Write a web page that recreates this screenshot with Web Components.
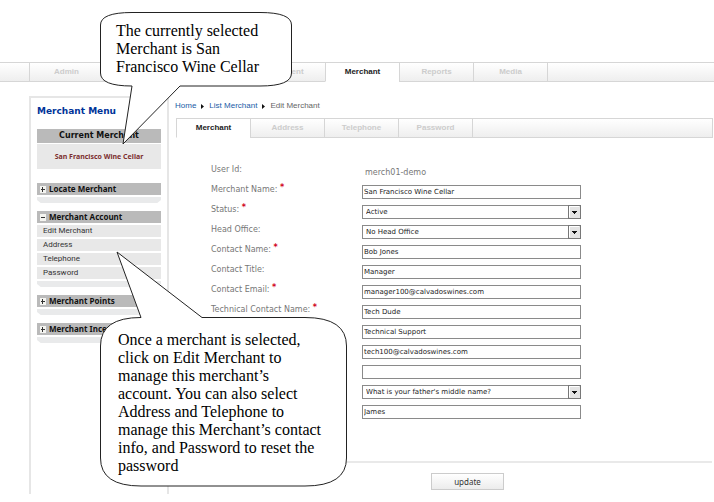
<!DOCTYPE html>
<html lang="en">
<head>
<meta charset="utf-8">
<title>Edit Merchant</title>
<style>
  body {
    margin: 0;
    background: #fff;
    font-family: "DejaVu Sans", sans-serif;
    font-size: 8px;
  }
</style>
</head>
<body>
<merchant-page></merchant-page>

<script>
class TabBar extends HTMLElement {
  constructor() {
    super()
    this.attachShadow({ mode: 'open' })
  }

  connectedCallback() {
    const active = this.getAttribute('active')
    const tabs = this.getAttribute('tabs').split(',')

    this.shadowRoot.innerHTML = `
      <style>
        :host {
          display: block;
          font: bold 8px/18px "Liberation Sans", Arial, sans-serif;
        }

        nav {
          display: flex;
        }

        .lead, .rest, a {
          box-sizing: border-box;
          height: 20px;
          border: solid #d6d6d6;
          border-width: 1px 0;
          background: linear-gradient(#fff, #eee);
        }

        .lead {
          width: var(--lead, 0);
        }

        .rest {
          flex: 1;
          border-width: 1px var(--end, 0) 1px 1px;
        }

        a {
          width: 74px;
          border-left-width: 1px;
          color: #ccc;
          text-align: center;
          text-decoration: none;
        }

        a.active {
          background: #fff;
          border-bottom-color: #fff;
          color: #222;
        }
      </style>

      <nav>
        <span class="lead"></span>
        ${tabs
        .map(
            tab => `<a href="#" class="${tab === active ? 'active' : ''}">${tab}</a>`
        )
        .join('')}
        <span class="rest"></span>
      </nav>
    `
  }
}

class MenuGroup extends HTMLElement {
  constructor() {
    super()
    this.attachShadow({ mode: 'open' })
  }

  connectedCallback() {
    const open = this.hasAttribute('open')

    this.shadowRoot.innerHTML = `
      <style>
        :host {
          display: block;
          margin-bottom: 8px;
        }

        button {
          display: flex;
          align-items: center;
          gap: 3px;
          box-sizing: border-box;
          width: 100%;
          height: 12px;
          padding: 0 3px;
          border: 0;
          background: #bababa;
          color: #111;
          font: bold 8px/12px "Noto Sans", sans-serif;
          white-space: nowrap;
        }

        svg {
          flex: none;
        }

        .foot {
          height: 6px;
          margin-top: 2px;
          background: #e9eaeb;
          clip-path: polygon(0 0, 100% 0, 100% 50%, 97% 100%, 3% 100%, 0 50%);
        }
      </style>

      <button type="button" aria-expanded="${open}">
        <svg width="6" height="7" viewBox="0 0 6 7" shape-rendering="crispEdges">
          <rect width="6" height="7" fill="#f4f4f0"/>
          <path d="M1 3h4v1H1z${open ? '' : 'M2 1h1v5H2z'}" fill="#333"/>
        </svg>
        ${this.getAttribute('label')}
      </button>
      <slot></slot>
      <div class="foot"></div>
    `
  }
}

class MenuItem extends HTMLElement {
  constructor() {
    super()
    this.attachShadow({ mode: 'open' })
    this.shadowRoot.innerHTML = `
      <style>
        :host {
          display: block;
          margin-top: 2px;
          background: #e8e8e8;
        }

        a {
          display: block;
          padding-left: 6px;
          color: #333;
          font: 8px/12px Roboto, sans-serif;
          text-decoration: none;
        }
      </style>

      <a href="#"><slot></slot></a>
    `
  }
}

class MerchantMenu extends HTMLElement {
  constructor() {
    super()
    this.attachShadow({ mode: 'open' })
    this.shadowRoot.innerHTML = `
      <style>
        :host {
          display: block;
          box-sizing: border-box;
          width: 140px;
          padding: 6px 6px 0 6px;
          border: 2px solid #e6e6e6;
          border-bottom: 0;
        }

        h2 {
          margin: 0 0 10px;
          color: #039;
          font: bold 9px/15px "DejaVu Sans", sans-serif;
        }

        h3 {
          margin: 0 0 1px;
          background: #bababa;
          color: #111;
          font: bold 8px/14px "DejaVu Sans", sans-serif;
          text-align: center;
        }

        .current {
          margin: 0 0 14px;
          background: #e8e8e8;
          color: #7c2f2f;
          font: bold 7px/25px "Noto Sans", sans-serif;
          text-align: center;
        }
      </style>

      <h2>Merchant Menu</h2>
      <h3>Current Merchant</h3>
      <p class="current">San Francisco Wine Cellar</p>
      <menu-group label="Locate Merchant"></menu-group>
      <menu-group label="Merchant Account" open>
        <menu-item>Edit Merchant</menu-item>
        <menu-item>Address</menu-item>
        <menu-item>Telephone</menu-item>
        <menu-item>Password</menu-item>
      </menu-group>
      <menu-group label="Merchant Points"></menu-group>
      <menu-group label="Merchant Incentives"></menu-group>
    `
  }
}

class FormRow extends HTMLElement {
  constructor() {
    super()
    this.attachShadow({ mode: 'open' })
  }

  control() {
    const value = this.getAttribute('value') || ''
    const name = this.getAttribute('name')
    const aria = name ? `aria-label="${name}"` : ''

    switch (this.getAttribute('type')) {
      case 'static':
        return `<output id="field">${value}</output>`
      case 'select':
        return `
          <div class="select">
            <select id="field" ${aria}><option>${value}</option></select>
            <svg width="13" height="14" viewBox="0 0 13 14" shape-rendering="crispEdges">
              <rect width="13" height="14" fill="#777"/>
              <rect x="1" y="1" width="11" height="12" fill="#e4e4e4"/>
              <path d="M1 1h10v1H2v10H1z" fill="#fff"/>
              <path d="M4 6h5v1H8v1H7v1H6V8H5V7H4z" fill="#111"/>
            </svg>
          </div>
        `
      default:
        return `<input id="field" type="text" ${aria} value="${value}">`
    }
  }

  connectedCallback() {
    const label = this.getAttribute('label') || ''
    const star = this.hasAttribute('required') ? ' <b>*</b>' : ''

    this.shadowRoot.innerHTML = `
      <style>
        :host {
          display: grid;
          grid-template-columns: 151px minmax(0, 219px);
          height: 14px;
        }

        label {
          color: #777;
          font: 8px/10px "DejaVu Sans", sans-serif;
          white-space: nowrap;
        }

        b {
          color: #d0021b;
          line-height: 1px;
          vertical-align: 2px;
        }

        output {
          padding-left: 3px;
          color: #777;
          line-height: 16px;
        }

        input, select {
          box-sizing: border-box;
          display: block;
          width: 100%;
          height: 14px;
          margin: 0;
          padding: 0 1px;
          border: 1px solid #8a8a8a;
          border-radius: 0;
          background: #fff;
          color: #222;
          font: 7px/12px "DejaVu Sans", sans-serif;
        }

        select {
          appearance: none;
          padding: 0 3px;
        }

        .select {
          position: relative;
        }

        svg {
          position: absolute;
          top: 0;
          right: 0;
          pointer-events: none;
        }
      </style>

      ${label ? `<label for="field">${label}${star}</label>` : '<span></span>'}
      ${this.control()}
    `
  }
}

class SpeechCallout extends HTMLElement {
  constructor() {
    super()
    this.attachShadow({ mode: 'open' })
  }

  connectedCallback() {
    this.shadowRoot.innerHTML = `
      <style>
        :host {
          display: block;
          position: absolute;
          box-sizing: border-box;
          color: #000;
          font: 16px/18px "Liberation Serif", serif;
        }

        svg {
          position: absolute;
          top: 0;
          left: 0;
          overflow: visible;
        }

        p {
          position: relative;
          margin: 0;
          white-space: pre-line;
        }
      </style>

      <svg width="1" height="1">
        <path d="${this.getAttribute('outline')}" fill="#fff" stroke="#222"/>
      </svg>
      <p><slot></slot></p>
    `
  }
}

class MerchantPage extends HTMLElement {
  constructor() {
    super()
    this.attachShadow({ mode: 'open' })
    this.shadowRoot.innerHTML = `
      <style>
        :host {
          display: block;
          position: relative;
          padding-top: 62px;
        }

        .main-tabs {
          --lead: 29px;
        }

        .columns {
          display: flex;
          align-items: stretch;
          margin-top: 14px;
          padding-left: 29px;
        }

        main {
          flex: 1;
          min-width: 0;
          padding-bottom: 4px;
        }

        .crumbs {
          display: flex;
          align-items: center;
          gap: 5px;
          margin: 4px 0 6px 6px;
          color: #666;
          font: 8px/12px "Liberation Sans", Arial, sans-serif;
        }

        .crumbs a {
          color: #1a5ba6;
          text-decoration: none;
        }

        .sub-tabs {
          --end: 1px;
          margin: 0 1px 0 7px;
        }

        form {
          margin: 0 2px 0 0;
        }

        .fields {
          display: grid;
          gap: 6px;
          padding: 27px 0 42px 42px;
        }

        .actions {
          padding: 10px 0 0 262px;
          border-top: 2px solid #e9e9e9;
        }

        .actions button {
          display: block;
          width: 73px;
          height: 17px;
          padding: 0;
          border: 1px solid #ccc;
          background: linear-gradient(#fff, #ececec);
          color: #333;
          font: 8px/14px "Noto Sans", sans-serif;
        }

        .selected-note {
          top: 12px;
          left: 100px;
          padding: 10px 16px;
        }

        .account-note {
          top: 317px;
          left: 100px;
          padding: 14px 18px;
        }
      </style>

      <tab-bar class="main-tabs" active="Merchant" tabs="Admin,,,Content,Merchant,Reports,Media"></tab-bar>

      <div class="columns">
        <merchant-menu></merchant-menu>
        <main>
          <div class="crumbs">
            <a href="#">Home</a>
            <svg width="3" height="5" viewBox="0 0 3 5"><path d="M0 0l3 2.500-3 2.500z" fill="#111"/></svg>
            <a href="#">List Merchant</a>
            <svg width="3" height="5" viewBox="0 0 3 5"><path d="M0 0l3 2.500-3 2.500z" fill="#111"/></svg>
            <span>Edit Merchant</span>
          </div>
          <tab-bar class="sub-tabs" active="Merchant" tabs="Merchant,Address,Telephone,Password"></tab-bar>
          <form>
            <div class="fields">
              <form-row label="User Id:" type="static" value="merch01-demo"></form-row>
              <form-row label="Merchant Name:" required value="San Francisco Wine Cellar"></form-row>
              <form-row label="Status:" required type="select" value="Active"></form-row>
              <form-row label="Head Office:" type="select" value="No Head Office"></form-row>
              <form-row label="Contact Name:" required value="Bob Jones"></form-row>
              <form-row label="Contact Title:" value="Manager"></form-row>
              <form-row label="Contact Email:" required value="manager100@calvadoswines.com"></form-row>
              <form-row label="Technical Contact Name:" required value="Tech Dude"></form-row>
              <form-row name="Technical Contact Title" value="Technical Support"></form-row>
              <form-row name="Technical Contact Email" value="tech100@calvadoswines.com"></form-row>
              <form-row name="Website"></form-row>
              <form-row name="Secret Question" type="select" value="What is your father's middle name?"></form-row>
              <form-row name="Secret Answer" value="James"></form-row>
            </div>
            <div class="actions"><button type="button">update</button></div>
          </form>
        </main>
      </div>

      <speech-callout class="selected-note" outline="M32 .5H160Q191.500 .5 191.500 13V61Q191.500 74 160 74H80L23 132L32 74Q.5 74 .5 61V13Q.5 .5 32 .5Z">The currently selected
Merchant is San
Francisco Wine Cellar</speech-callout>
      <speech-callout class="account-note" outline="M41 .5L17 -65L102 .5H205Q246.500 .5 246.500 29V141Q246.500 169 205 169H41Q.5 169 .5 141V29Q.5 .5 41 .5Z">Once a merchant is selected,
click on Edit Merchant to
manage this merchant’s
account. You can also select
Address and Telephone to
manage this Merchant’s contact
info, and Password to reset the
password</speech-callout>
    `
  }
}

customElements.define('tab-bar', TabBar)
customElements.define('menu-group', MenuGroup)
customElements.define('menu-item', MenuItem)
customElements.define('merchant-menu', MerchantMenu)
customElements.define('form-row', FormRow)
customElements.define('speech-callout', SpeechCallout)
customElements.define('merchant-page', MerchantPage)
</script>
</body>
</html>
